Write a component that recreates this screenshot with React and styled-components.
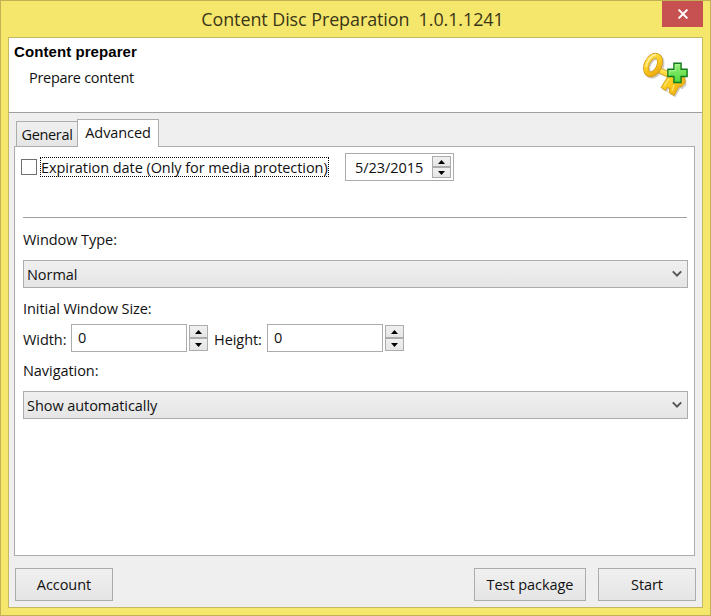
import React, {useState} from "react";
import styled, {createGlobalStyle} from "styled-components";

export default function App() {
    const [tab, setTab] = useState("Advanced");
    const [expires, setExpires] = useState(false);

    return (
        <Window>
            <GlobalStyle/>
            <TitleBar>
                <Title>Content Disc Preparation&nbsp; 1.0.1.1241</Title>
                <CloseButton aria-label="Close">
                    <svg width="12" height="10" viewBox="0 0 12 10">
                        <path d="M1.6 0.6L10.4 9.4M10.4 0.6L1.6 9.4" stroke="#fff" strokeWidth="2"/>
                    </svg>
                </CloseButton>
            </TitleBar>
            <Client>
                <Header>
                    <div>
                        <Heading>Content preparer</Heading>
                        <SubHeading>Prepare content</SubHeading>
                    </div>
                    <KeyIcon/>
                </Header>
                <Tabs>
                    {["General", "Advanced"].map((name) => (
                        <Tab key={name} $active={tab === name} onClick={() => setTab(name)}>{name}</Tab>
                    ))}
                </Tabs>
                <Panel>
                    <ExpirationRow>
                        <CheckBox role="checkbox" aria-checked={expires} onClick={() => setExpires(!expires)}/>
                        <FocusLabel>Expiration date (Only for media protection)</FocusLabel>
                        <DateField>
                            <DateText>5/23/2015</DateText>
                            <Spinner compact/>
                        </DateField>
                    </ExpirationRow>
                    <Separator/>
                    <Label $height={42} $drop={2}>Window Type:</Label>
                    <Select value="Normal"/>
                    <Label $height={36} $drop={5}>Initial Window Size:</Label>
                    <SizeRow>
                        <SizeLabel $width={48}>Width:</SizeLabel>
                        <SizeInput>0</SizeInput>
                        <Spinner/>
                        <SizeLabel $width={53} $gap={6}>Height:</SizeLabel>
                        <SizeInput>0</SizeInput>
                        <Spinner/>
                    </SizeRow>
                    <Label $height={39} $lift={2}>Navigation:</Label>
                    <Select value="Show automatically"/>
                </Panel>
                <Footer>
                    <Button $width={98}>Account</Button>
                    <FooterRight>
                        <Button $width={112}>Test package</Button>
                        <Button $width={98}>Start</Button>
                    </FooterRight>
                </Footer>
            </Client>
        </Window>
    );
}

function Spinner({compact}) {
    return (
        <SpinnerBox $compact={compact}>
            <SpinnerButton aria-label="Up">
                <svg width="7" height="4" viewBox="0 0 7 4"><path d="M3.5 0L7 4H0Z" fill="#000"/></svg>
            </SpinnerButton>
            <SpinnerButton aria-label="Down">
                <svg width="7" height="4" viewBox="0 0 7 4"><path d="M0 0H7L3.5 4Z" fill="#000"/></svg>
            </SpinnerButton>
        </SpinnerBox>
    );
}

function Select({value}) {
    return (
        <SelectBox>
            <SelectText>{value}</SelectText>
            <svg width="10" height="8" viewBox="0 0 10 8">
                <path d="M0.8 1.4L5 5.6L9.2 1.4" fill="none" stroke="#555" strokeWidth="2"/>
            </svg>
        </SelectBox>
    );
}

function KeyIcon() {
    return (
        <KeySvg width="48" height="48" viewBox="0 0 48 48">
            <defs>
                <linearGradient id="gold" x1="0" y1="0" x2="1" y2="1">
                    <stop offset="0" stopColor="#ffe04d"/>
                    <stop offset="0.5" stopColor="#fbcb20"/>
                    <stop offset="1" stopColor="#e9a80f"/>
                </linearGradient>
                <linearGradient id="green" x1="0" y1="0" x2="0" y2="1">
                    <stop offset="0" stopColor="#9aee78"/>
                    <stop offset="1" stopColor="#4cd93f"/>
                </linearGradient>
            </defs>
            {/* drop shadow */}
            <g opacity="0.35" transform="translate(1.3 1.2)">
                <ellipse cx="10" cy="15" rx="6.4" ry="10" transform="rotate(25 10 15)" fill="none" stroke="#7d7258" strokeWidth="6"/>
                <path d="M17 18L42 29V34L38 38L36 37L31 46L26 43L27 39L24 38L23 41L18 38L25 27L16 23Z" fill="#7d7258"/>
            </g>
            {/* blade */}
            <path
                d="M17 18L42 28V33L38 37L36 36.5L31 45.5L26 42.5L27 38.5L24 37.5L22.5 40.5L18 37.5L24.5 27L16 23Z"
                fill="url(#gold)" stroke="#cf930d" strokeWidth="0.8"/>
            {/* bow */}
            <ellipse cx="10" cy="15" rx="6.2" ry="9.8" transform="rotate(25 10 15)" fill="none" stroke="#c98f12" strokeWidth="5.8"/>
            <ellipse cx="10" cy="15" rx="6.2" ry="9.8" transform="rotate(25 10 15)" fill="none" stroke="url(#gold)" strokeWidth="4.6"/>
            <path d="M3 17C4 11 8 5 13 4.5" fill="none" stroke="#fff0a0" strokeWidth="1.5"/>
            <path d="M19 20L27 24M26 29L21 36M31 35L29 41" stroke="#ffe873" strokeWidth="1.1"/>
            <path
                d="M30.9 13.3H38.1V19.3H44.1V26.5H38.1V32.5H30.9V26.5H24.9V19.3H30.9Z"
                fill="url(#green)" stroke="#137b1d" strokeWidth="1.4"/>
            <path d="M37 14.8H32.3V20.8H26.3V25.3" fill="none" stroke="#c4fbb0" strokeOpacity="0.6"/>
        </KeySvg>
    );
}

const GlobalStyle = createGlobalStyle`
  * {
    box-sizing: border-box;
  }

  body {
    margin: 0;
  }

  button {
    font: inherit;
    letter-spacing: inherit;
    color: inherit;
    padding: 0;
  }

  svg {
    display: block;
    flex: none;
  }
`;

const Window = styled.div`
  width: 711px;
  height: 616px;
  padding: 0 7px 7px;
  display: flex;
  flex-direction: column;
  background: #f5e76c;
  border: 1px solid #c0b254;
  font: 14.5px/20px "Open Sans", "Noto Sans", sans-serif;
  letter-spacing: -0.06px;
  color: #111;
  white-space: nowrap;
`;

const TitleBar = styled.div`
  height: 36px;
  flex: none;
  display: grid;
  grid-template-columns: 41px 1fr 41px;
  align-items: start;
`;

const Title = styled.div`
  grid-column: 2;
  text-align: center;
  padding-right: 6px;
  font-size: 17.9px;
  line-height: 36px;
  color: #3a3618;
`;

const CloseButton = styled.button`
  width: 41px;
  height: 26px;
  border: 0;
  background: #c75050;
  display: flex;
  align-items: center;
  justify-content: center;
`;

const Client = styled.div`
  flex: 1;
  display: flex;
  flex-direction: column;
  background: #efefef;
  border: 1px solid #c4b861;
`;

const Header = styled.div`
  height: 75px;
  flex: none;
  display: flex;
  justify-content: space-between;
  padding: 4px 11px 0 5px;
  background: #fff;
  border-bottom: 1px solid #a0a0a0;
`;

const Heading = styled.div`
  font: bold 15px/20px "Liberation Sans", Arial, sans-serif;
  letter-spacing: 0.08px;
  color: #000;
`;

const SubHeading = styled.div`
  padding: 6px 0 0 15px;
  letter-spacing: -0.3px;
`;

const KeySvg = styled.svg`
  margin-top: 8px;
`;

const Tabs = styled.div`
  height: 33px;
  flex: none;
  display: flex;
  align-items: flex-end;
  padding-left: 7px;
`;

const Tab = styled.button`
  width: ${(p) => (p.$active ? 82 : 62)}px;
  height: ${(p) => (p.$active ? 28 : 25)}px;
  margin-bottom: ${(p) => (p.$active ? -1 : 0)}px;
  margin-left: ${(p) => (p.$active ? -1 : 0)}px;
  padding: ${(p) => (p.$active ? "0 0 2px" : "2px 0 0")};
  letter-spacing: ${(p) => (p.$active ? -0.1 : -0.35)}px;
  border: 1px solid #acacac;
  border-bottom: 0;
  background: ${(p) => (p.$active ? "#fff" : "linear-gradient(#f0f0f0, #e5e5e5)")};
  position: relative;
`;

const Panel = styled.div`
  height: 410px;
  flex: none;
  margin: 0 7px 0 5px;
  padding: 6px 6px 0 8px;
  background: #fff;
  border: 1px solid #acacac;
`;

const ExpirationRow = styled.div`
  display: flex;
  align-items: center;
  height: 28px;
  margin-left: -2px;
`;

const CheckBox = styled.div`
  width: 16px;
  height: 16px;
  margin-right: 3px;
  border: 1px solid #707070;
  background: #fff;
`;

const FocusLabel = styled.div`
  width: 289px;
  height: 20px;
  line-height: 19px;
  border: 1px dotted #000;
`;

const DateField = styled.div`
  width: 109px;
  height: 28px;
  margin-left: 16px;
  padding: 0 2px 0 9px;
  display: flex;
  align-items: center;
  justify-content: space-between;
  border: 1px solid #acacac;
`;

const DateText = styled.span`
  padding-top: 2px;
`;

const Separator = styled.div`
  height: 37px;
  border-bottom: 1px solid #a0a0a0;
  margin-right: 1px;
`;

const Label = styled.div`
  height: ${(p) => p.$height}px;
  padding-top: ${(p) => p.$drop || 0}px;
  padding-bottom: ${(p) => p.$lift || 0}px;
  display: flex;
  align-items: center;
`;

const SelectBox = styled.div`
  height: 28px;
  padding: 0 5px 0 3px;
  display: flex;
  align-items: center;
  justify-content: space-between;
  border: 1px solid #acacac;
  background: linear-gradient(#f0f0f0, #e5e5e5);
`;

const SelectText = styled.span`
  padding-top: 2px;
`;

const SizeRow = styled.div`
  display: flex;
  align-items: center;
  height: 28px;
`;

const SizeLabel = styled.div`
  width: ${(p) => p.$width}px;
  margin-left: ${(p) => p.$gap || 0}px;
  padding-top: 3px;
`;

const SizeInput = styled.div`
  width: 116px;
  height: 28px;
  margin-right: 2px;
  padding-left: 6px;
  line-height: 26px;
  border: 1px solid #acacac;
`;

const SpinnerBox = styled.div`
  width: 19px;
  height: ${(p) => (p.$compact ? 22 : 26)}px;
  display: flex;
  flex-direction: column;
`;

const SpinnerButton = styled.button`
  flex: 1;
  min-height: 0;
  display: flex;
  align-items: center;
  justify-content: center;
  border: 1px solid #acacac;
  background: linear-gradient(#f0f0f0, #e5e5e5);
`;

const Footer = styled.div`
  display: flex;
  justify-content: space-between;
  padding: 12px 6px 0 6px;
`;

const FooterRight = styled.div`
  display: flex;
  gap: 12px;
`;

const Button = styled.button`
  width: ${(p) => p.$width}px;
  height: 33px;
  border: 1px solid #acacac;
  background: linear-gradient(#f0f0f0, #e5e5e5);
`;
